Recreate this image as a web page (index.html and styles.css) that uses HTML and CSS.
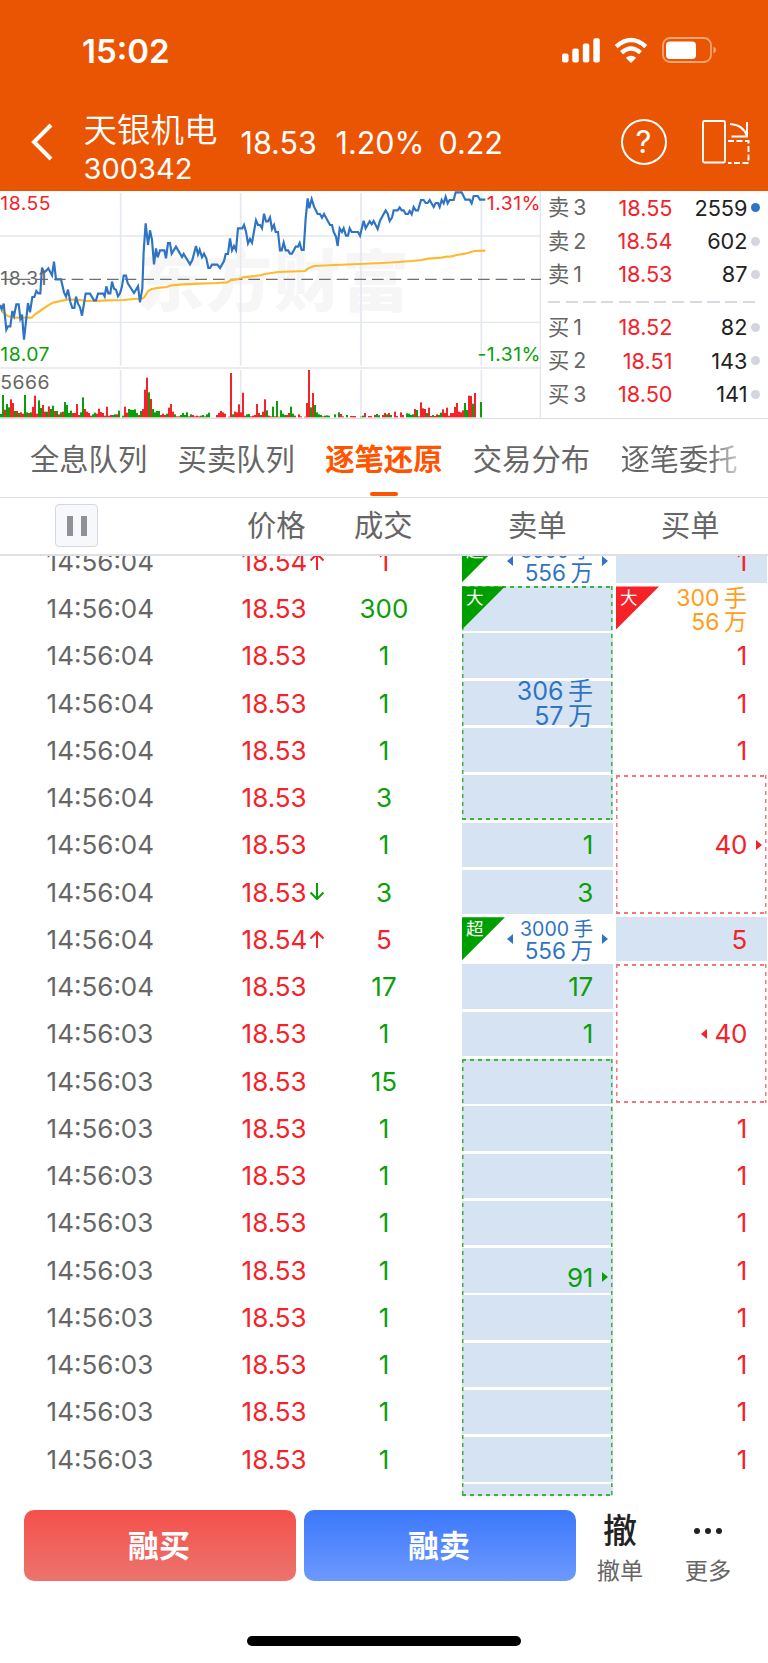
FILE: index.html
```html
<!DOCTYPE html>
<html lang="zh-CN">
<head>
    <meta charset="UTF-8">
    <title>天银机电 300342</title>
    <link rel="stylesheet" href="styles.css">
</head>
<body>
    <header class="header">
        <div class="status-bar">
            <span class="clock">15:02</span>
            <svg class="status-icons" width="160" height="28" viewBox="0 0 160 28">
                <g fill="#fff">
                    <rect x="2" y="16.5" width="6.5" height="9" rx="2"/>
                    <rect x="12.3" y="11.5" width="6.5" height="14" rx="2"/>
                    <rect x="22.8" y="6.5" width="6.5" height="19" rx="2"/>
                    <rect x="33.3" y="1.3" width="6.5" height="24.2" rx="2"/>
                    <path d="M71 26L65.8 20.8Q71 16.5 76.2 20.8Z"/>
                    <rect x="106" y="4.5" width="30" height="17.5" rx="4"/>
                </g>
                <g fill="none" stroke="#fff" stroke-width="4.4">
                    <path d="M56.2 9.6Q71 -3.6 85.8 9.6"/>
                    <path d="M61.5 15.6Q71 7.4 80.5 15.6"/>
                </g>
                <rect x="103" y="1" width="48" height="24" rx="7" fill="none" stroke="#f6a675" stroke-width="1.8"/>
                <path d="M153.5 9.5Q156 10.5 156 13T153.5 16.5Z" fill="#f6a675"/>
            </svg>
        </div>
        <div class="nav">
            <svg class="back" width="22" height="38" viewBox="0 0 22 38">
                <path d="M20 2L3 19L20 36" fill="none" stroke="#fff" stroke-width="4"/>
            </svg>
            <div class="stock">
                <div class="stock-name">天银机电</div>
                <div class="stock-code">300342</div>
            </div>
            <div class="stock-quote">
                <span class="q1">18.53</span><span class="q2">1.20%</span><span class="q3">0.22</span>
            </div>
            <div class="help">?</div>
            <svg class="rotate" width="50" height="48" viewBox="0 0 50 48" fill="none" stroke="#fff" stroke-width="1.9">
                <rect x="2" y="3" width="22" height="41.5" rx="1.5"/>
                <path d="M29 6Q43 7 46 18.500M46 4V18.500H30.500"/>
                <path d="M27 23H47.500V45H27" stroke-dasharray="6 2.500"/>
            </svg>
        </div>
    </header>

    <section class="market">
        <svg class="chart" viewBox="0 18 1623 684" width="541" height="228">
            <text class="watermark" x="412" y="362">东方财富</text>
            <g stroke="#e4e8f0" stroke-width="5">
                <path d="M0 153H1623M0 412H1623" stroke-width="4"/>
                <path d="M362 24V542M722 24V542M1083 24V542M1444 24V542"/>
                <path d="M362 555V697M722 555V697M1083 555V697M1444 555V697"/>
                <path d="M0 549H1623M1621 15V699" stroke="#e6e6ea" stroke-width="4"/>
            </g>
            <path d="M3 283H1623" stroke="#6f6f6f" stroke-width="4" stroke-dasharray="35 18"/>
            <g id="volumes"></g>
            <polyline class="avg-line" points="0,362 8,382 25,394 45,398 95,398 105,388 120,378 140,364 158,353 190,346 205,343 240,345 260,348 290,348 320,346 370,345 400,342 425,341 432,338 445,318 455,312 480,308 500,306 515,301 550,298 600,296 650,294 682,292 692,286 715,282 730,277 765,273 785,270 795,267 815,264 835,261 915,258 925,250 942,243 1005,240 1075,237 1145,234 1195,231 1235,228 1265,225 1285,221 1325,218 1340,215 1355,214 1370,210 1395,206 1423,198 1456,197"/>
            <polyline class="price-line" points="0,360 5,372 11,356 19,434 24,424 31,424 37,378 42,393 49,358 56,358 61,401 66,389 72,464 84,354 90,382 97,336 103,336 109,318 115,325 121,325 126,248 132,262 138,258 145,250 156,271 162,230 168,283 183,283 192,322 198,335 204,314 211,351 217,369 223,369 228,335 234,356 240,367 246,392 257,326 270,326 282,346 288,346 294,326 310,326 314,334 319,304 325,325 331,325 336,290 342,311 348,314 354,334 360,325 366,304 371,272 378,272 383,294 402,324 414,304 420,352 427,310 431,200 437,115 444,180 450,136 456,165 462,238 468,190 473,217 480,196 493,196 498,220 504,174 510,174 515,206 528,185 546,216 551,207 570,238 577,225 588,183 594,208 599,194 606,217 612,206 619,220 625,249 630,249 636,239 652,239 660,249 672,228 677,207 684,207 690,160 696,196 702,183 708,195 714,130 727,130 732,120 738,140 744,175 750,162 756,173 768,106 774,120 780,120 786,130 792,86 798,109 804,109 810,97 816,132 822,120 827,141 834,141 840,196 845,196 851,173 857,196 864,196 870,206 876,206 887,185 894,185 899,174 905,195 911,195 917,100 923,40 928,70 935,42 942,65 953,87 960,87 966,98 972,87 990,120 996,120 1001,141 1008,155 1013,183 1019,130 1026,141 1031,130 1038,152 1044,152 1049,130 1055,141 1074,141 1080,152 1091,107 1097,130 1109,109 1115,118 1121,108 1133,132 1140,107 1157,76 1163,86 1169,108 1176,98 1181,76 1193,76 1199,67 1205,76 1211,76 1217,87 1224,87 1229,78 1235,88 1241,66 1247,76 1254,76 1263,45 1271,45 1277,54 1283,54 1289,45 1301,66 1307,54 1314,54 1319,66 1325,45 1331,55 1337,35 1343,55 1349,45 1361,45 1367,22 1385,22 1396,44 1409,44 1415,55 1421,33 1433,33 1440,44 1456,44"/>
            <g class="chart-label">
                <text x="1" y="75" fill="#f5222a">18.55</text>
                <text x="1" y="301" fill="#666">18.31</text>
                <text x="1" y="527" fill="#0a9f0a">18.07</text>
                <text x="1" y="611" fill="#666">5666</text>
                <text x="1623" y="75" fill="#f5222a" text-anchor="end">1.31%</text>
                <text x="1623" y="527" fill="#0a9f0a" text-anchor="end">-1.31%</text>
            </g>
        </svg>
        <div class="depth">
            <div class="depth-row"><span>卖 3</span><b>18.55</b><em>2559</em><i class="dot dot-on"></i></div>
            <div class="depth-row"><span>卖 2</span><b>18.54</b><em>602</em><i class="dot"></i></div>
            <div class="depth-row"><span>卖 1</span><b>18.53</b><em>87</em><i class="dot"></i></div>
            <div class="depth-line"></div>
            <div class="depth-row"><span>买 1</span><b>18.52</b><em>82</em><i class="dot"></i></div>
            <div class="depth-row"><span>买 2</span><b>18.51</b><em>143</em><i class="dot"></i></div>
            <div class="depth-row"><span>买 3</span><b>18.50</b><em>141</em><i class="dot"></i></div>
        </div>
    </section>

    <nav class="tabs">
        <a>全息队列</a>
        <a>买卖队列</a>
        <a class="active">逐笔还原</a>
        <a>交易分布</a>
        <a class="fade">逐笔委托</a>
    </nav>

    <div class="table-head">
        <div class="pause"><i></i><i></i></div>
        <span class="h-price">价格</span>
        <span class="h-volume">成交</span>
        <span class="h-sell">卖单</span>
        <span class="h-buy">买单</span>
    </div>

    <main class="table-body">
        <div class="trades" id="trades"></div>

        <div class="orders sell">
            <div class="cell huge">
                <div class="corner">超</div>
                <i class="tri left"></i>
                <div class="lots"><div class="small">3000<u>手</u></div><div>556<u>万</u></div></div>
                <i class="tri right"></i>
            </div>
            <div class="group span5">
                <div class="corner">大</div>
                <div class="lots"><div>306<u>手</u></div><div>57<u>万</u></div></div>
            </div>
            <div class="cell">1</div>
            <div class="cell">3</div>
            <div class="cell huge">
                <div class="corner">超</div>
                <i class="tri left"></i>
                <div class="lots"><div class="small">3000<u>手</u></div><div>556<u>万</u></div></div>
                <i class="tri right"></i>
            </div>
            <div class="cell">17</div>
            <div class="cell">1</div>
            <div class="group span-last">91<i class="tri right"></i></div>
        </div>

        <div class="orders buy">
            <div class="cell">1</div>
            <div class="cell plain big">
                <div class="corner">大</div>
                <div class="lots"><div>300<u>手</u></div><div>56<u>万</u></div></div>
            </div>
            <div class="cell plain">1</div>
            <div class="cell plain">1</div>
            <div class="cell plain">1</div>
            <div class="group span3">40<i class="tri right"></i></div>
            <div class="cell">5</div>
            <div class="group span3"><i class="tri left"></i>40</div>
            <div class="cell plain">1</div>
            <div class="cell plain">1</div>
            <div class="cell plain">1</div>
            <div class="cell plain">1</div>
            <div class="cell plain">1</div>
            <div class="cell plain">1</div>
            <div class="cell plain">1</div>
            <div class="cell plain">1</div>
        </div>
    </main>

    <footer class="footer">
        <button class="btn btn-buy">融买</button>
        <button class="btn btn-sell">融卖</button>
        <div class="action">
            <div class="action-icon">撤</div>
            <div class="action-text">撤单</div>
        </div>
        <div class="action more">
            <div class="action-icon"><i></i><i></i><i></i></div>
            <div class="action-text">更多</div>
        </div>
    </footer>
    <div class="home-bar"></div>

    <script src="script.js"></script>
</body>
</html>
```

FILE: styles.css
```css
* {
    box-sizing: border-box;
}

body {
    margin: 0;
    width: 768px;
    height: 1663px;
    overflow: hidden;
    background: #fff;
    color: #666;
    font-family: Inter, "Noto Sans CJK SC", sans-serif;
}

i, em, u, b {
    font-style: normal;
    font-weight: 400;
    text-decoration: none;
}

/* header */
.header {
    height: 191px;
    background: #ea5504;
    color: #fff;
}

.status-bar {
    display: flex;
    justify-content: space-between;
    align-items: center;
    height: 103px;
    padding: 0 48px 0 82px;
}

.clock {
    padding-bottom: 1px;
    font-size: 33px;
    font-weight: 600;
}

.status-icons {
    margin-bottom: 1px;
}

.nav {
    display: flex;
    align-items: center;
    height: 78px;
    padding-left: 31px;
}

.stock {
    width: 157px;
    margin-left: 30.5px;
    padding-top: 12px;
}

.stock-name {
    font-size: 33.5px;
    line-height: 42px;
    font-weight: 350;
}

.stock-code {
    font-size: 29px;
    line-height: 36px;
}

.stock-quote {
    display: flex;
    width: 380px;
    font-size: 30.5px;
}

.q1 {
    width: 95px;
}

.q2 {
    width: 103px;
}

.help {
    width: 46px;
    height: 46px;
    border: 2px solid #fff;
    border-radius: 50%;
    font-size: 31px;
    line-height: 41px;
    text-align: center;
}

.rotate {
    margin-left: 34px;
}

/* chart and order depth */
.market {
    display: flex;
    height: 228px;
    border-bottom: 1px solid #dcdce2;
}

.chart {
    flex: none;
}

.watermark {
    font-size: 200px;
    font-weight: 900;
    letter-spacing: 5px;
    fill: #f6f6f6;
}

.price-line {
    fill: none;
    stroke: #2f74c4;
    stroke-width: 6.5;
}

.avg-line {
    fill: none;
    stroke: #ffb92e;
    stroke-width: 6.5;
}

.chart-label {
    font-size: 58px;
    letter-spacing: 1.5px;
}

.depth {
    flex: 1;
    padding: 0 8px 0 7px;
}

.depth-row {
    display: flex;
    align-items: center;
    height: 33.4px;
    font-size: 21.7px;
}

.depth-row span {
    width: 54px;
    font-size: 21.3px;
    line-height: 30px;
    padding-bottom: 1px;
    word-spacing: -2px;
}

.depth-row b {
    width: 70.5px;
    text-align: right;
    color: #f5222a;
}

.depth-row em {
    width: 75px;
    text-align: right;
    color: #222;
}

.dot {
    width: 9px;
    height: 9px;
    margin-left: 3.5px;
    border-radius: 50%;
    background: #d3d6de;
}

.dot-on {
    background: #2f74c4;
}

.depth-line {
    height: 2px;
    margin: 9.500px 2px 8px 0;
    background: repeating-linear-gradient(90deg, #d8dae2 0 12.2px, transparent 12.2px 17.7px);
}

/* tabs */
.tabs {
    display: flex;
    gap: 30.3px;
    height: 78.5px;
    padding-left: 30px;
    border-bottom: 1px solid #dcdce2;
    font-size: 29.3px;
    line-height: 82px;
}

.tabs a {
    flex: none;
    width: 117.3px;
}

.tabs .active {
    display: flex;
    flex-direction: column;
    align-items: center;
    color: #ff5500;
    font-weight: 600;
}

.tabs .active::after {
    content: "";
    width: 28px;
    height: 4px;
    margin-top: -9.5px;
    border-radius: 2px;
    background: #ff5500;
}

.tabs .fade {
    color: transparent;
    background: linear-gradient(90deg, #666 75%, #ccc 100%);
    -webkit-background-clip: text;
    background-clip: text;
}

/* table head */
.table-head {
    display: flex;
    align-items: center;
    height: 58px;
    border-bottom: 2px solid #dfe0e6;
    font-size: 29.3px;
    line-height: 40px;
}

.pause {
    display: flex;
    align-items: center;
    justify-content: center;
    gap: 8px;
    width: 43px;
    height: 43px;
    margin-left: 55px;
    border: 1.5px solid #d5d8e0;
    border-radius: 4px;
    background: #f7f8fb;
}

.pause i {
    width: 6px;
    height: 20px;
    background: #8f9099;
}

.h-price {
    margin-left: 149px;
    width: 107px;
}

.h-volume {
    width: 154px;
}

.h-sell {
    width: 153px;
}

/* table body, every row is 47.25px */
.table-body {
    display: flex;
    align-items: flex-start;
    height: 941.5px;
    overflow: hidden;
    font-size: 26px;
}

.trades {
    width: 462px;
    margin-top: -17.8px;
}

.trade {
    display: flex;
    align-items: center;
    height: 47.25px;
}

.trade-time {
    width: 195px;
    margin-left: 46.6px;
}

.trade-price {
    display: flex;
    align-items: center;
    gap: 2px;
    width: 112.4px;
    color: #f5222a;
}

.trade-volume {
    width: 60px;
    text-align: center;
}

.down {
    color: #0a9f0a;
}

.up {
    color: #f5222a;
}

.orders {
    display: grid;
    grid-auto-rows: 47.25px;
    width: 150.5px;
    margin-top: -17.8px;
}

.sell {
    color: #0a9f0a;
}

.buy {
    margin-left: 3.5px;
    color: #f5222a;
}

.cell,
.group {
    position: relative;
    display: flex;
    align-items: center;
    justify-content: flex-end;
    margin: 1.5px 0;
    padding-right: 19.5px;
    background: #d6e3f3;
    letter-spacing: -0.3px;
}

.plain,
.huge {
    background: none;
}

/* merged orders: dashed frame over the striped rows */
.group {
    --dash: #3cb43c;
    --stripe: repeating-linear-gradient(#d6e3f3 0 44.5px, #fff 44.5px 47.25px);
    background:
        repeating-linear-gradient(90deg, var(--dash) 0 4.5px, transparent 4.5px 8px) 0 0 / 100% 2px no-repeat,
        repeating-linear-gradient(90deg, var(--dash) 0 4.5px, transparent 4.5px 8px) 0 100% / 100% 2px no-repeat,
        repeating-linear-gradient(var(--dash) 0 4.5px, transparent 4.5px 8px) 0 0 / 1.5px 100% no-repeat,
        repeating-linear-gradient(var(--dash) 0 4.5px, transparent 4.5px 8px) 100% 0 / 1.5px 100% no-repeat,
        var(--stripe);
}

.buy .group {
    --dash: #f6757a;
    --stripe: none;
}

.span3 {
    grid-row: span 3;
}

.span5 {
    grid-row: span 5;
}

.span-last {
    grid-row: span 10;
    height: 437px;
}

.corner {
    position: absolute;
    left: 0;
    top: 0;
    width: 43px;
    height: 43px;
    padding-left: 4px;
    background: #009f00;
    clip-path: polygon(0 0, 100% 0, 0 100%);
    color: #fff;
    font-size: 17.5px;
    line-height: 24px;
}

.buy .corner {
    background: #f5222a;
}

.lots {
    padding-top: 2px;
    text-align: right;
    color: #2f74c4;
    line-height: 25.5px;
    font-size: 25px;
    letter-spacing: 0;
}

.lots u {
    margin-left: 4.5px;
}

.huge .lots {
    font-size: 22.5px;
    line-height: 22px;
}

.huge .small {
    font-size: 19.5px;
}

.big .lots {
    color: #ff9d1c;
    font-size: 23px;
    line-height: 24px;
}

.tri {
    width: 0;
    height: 0;
    border: 5px solid transparent;
}

.tri.right {
    position: absolute;
    right: 5px;
    border-left: 6px solid;
    border-right: 0;
}

.tri.left {
    margin-right: 7px;
    border-right: 6px solid;
    border-left: 0;
}

.huge .tri {
    color: #2f74c4;
}

/* footer */
.footer {
    display: flex;
    gap: 8px;
    padding: 13px 0 0 24px;
}

.btn {
    width: 272px;
    height: 71px;
    padding: 0 2px 4px 0;
    border: none;
    border-radius: 10px;
    color: #fff;
    font-family: inherit;
    font-size: 31px;
    font-weight: 600;
}

.btn-buy {
    background: linear-gradient(#f5504b, #ec746e);
}

.btn-sell {
    background: linear-gradient(#3b78fb, #6d99fe);
}

.action {
    width: 80px;
    margin-left: -4px;
    padding-top: 1px;
    text-align: center;
}

.action-icon {
    height: 40px;
    color: #222;
    font-size: 34px;
    line-height: 40px;
    font-weight: 500;
}

.action-text {
    font-size: 23.2px;
    line-height: 40px;
}

.more {
    margin-left: 0;
}

.more .action-icon {
    display: flex;
    align-items: center;
    justify-content: center;
    gap: 5px;
}

.more i {
    width: 6px;
    height: 6px;
    border-radius: 50%;
    background: #222;
}

.home-bar {
    width: 274px;
    height: 10px;
    margin: 45px auto 0;
    border-radius: 5px;
    background: #000;
}
```

FILE: script.js
```js
// volume bars, positive = red, negative = green
var volumes = [
    -10, -67, 23, -40, -30, 54, 43, -19, 19, -13, 15, 11, -67, -15, 13, -15, 31, 65, 11, -51,
    -28, 37, 17, -17, 33, -25, -35, 19, -19, 9, -15, 17, -46, -37, -13, -20, 13, 13, 40, 7,
    -15, -60, 25, 17, 13, 5, -9, -14, 11, 26, 16, 13, -5, 32, 5, 7, -7, -9, 9, -20,
    0, -5, 32, 14, -25, -23, -22, -24, -13, 7, -19, 25, 83, 119, -75, 55, -25, -15, -19, -19,
    7, 11, 7, -11, 29, 40, 17, -9, 3, 3, -7, -13, -7, -15, 3, -9, 7, 3, 5, 3,
    -5, -7, 3, -9, -14, 0, 0, 0, 7, 13, 19, 15, 11, 0, 2, 133, -9, 17, 15, 39,
    15, 74, 5, -9, -10, 3, 5, 7, 40, 13, -7, 17, 54, -21, 5, 3, -32, 3, -49, 2,
    -21, -11, -7, 7, 13, -32, -11, 5, 0, 9, 3, 0, 2, 43, 142, -30, 73, -37, -15, -9,
    -7, 3, -5, -6, -5, 0, 0, -9, 0, -15, 10, 3, 0, -7, 0, 4, 4, 4, 0, 0,
    -2, -5, 13, 0, 4, 4, 0, 7, -10, -6, 0, 7, 13, -9, 13, -7, 0, 17, 4, 0,
    15, 7, 0, -12, -11, -7, -9, 25, -22, 3, 45, 27, 25, -13, 29, 4, -7, 4, 9, -7,
    -14, 24, 13, 29, 5, 13, 13, 31, 43, 17, 15, 21, -43, -22, 65, 64, -41, 73, 0, 0, -46
];

var bars = '';
volumes.forEach(function (v, i) {
    var h = Math.abs(v);
    bars += '<rect x="' + i * 6 + '" y="' + (697 - h) + '" width="6" height="' + h +
        '" fill="' + (v > 0 ? '#f5222a' : '#0a9f0a') + '"/>';
});
document.getElementById('volumes').innerHTML = bars;

// [time, price, volume, direction, arrow]
var trades = [
    ['14:56:04', '18.54', 1, 'up', 'up'],
    ['14:56:04', '18.53', 300, 'down'],
    ['14:56:04', '18.53', 1, 'down'],
    ['14:56:04', '18.53', 1, 'down'],
    ['14:56:04', '18.53', 1, 'down'],
    ['14:56:04', '18.53', 3, 'down'],
    ['14:56:04', '18.53', 1, 'down'],
    ['14:56:04', '18.53', 3, 'down', 'down'],
    ['14:56:04', '18.54', 5, 'up', 'up'],
    ['14:56:04', '18.53', 17, 'down'],
    ['14:56:03', '18.53', 1, 'down'],
    ['14:56:03', '18.53', 15, 'down'],
    ['14:56:03', '18.53', 1, 'down'],
    ['14:56:03', '18.53', 1, 'down'],
    ['14:56:03', '18.53', 1, 'down'],
    ['14:56:03', '18.53', 1, 'down'],
    ['14:56:03', '18.53', 1, 'down'],
    ['14:56:03', '18.53', 1, 'down'],
    ['14:56:03', '18.53', 1, 'down'],
    ['14:56:03', '18.53', 1, 'down']
];

var arrows = {
    up: 'M8 18V2M1.500 8.500L8 2L14.500 8.500',
    down: 'M8 0V16M1.500 9.500L8 16L14.500 9.500'
};

var rows = '';
trades.forEach(function (t) {
    var arrow = t[4] ? '<svg class="' + t[4] + '" width="16" height="18"><path d="' + arrows[t[4]] +
        '" fill="none" stroke="currentColor" stroke-width="2"/></svg>' : '';
    rows += '<div class="trade"><span class="trade-time">' + t[0] + '</span>' +
        '<span class="trade-price">' + t[1] + arrow + '</span>' +
        '<span class="trade-volume ' + t[3] + '">' + t[2] + '</span></div>';
});
document.getElementById('trades').innerHTML = rows;
```
